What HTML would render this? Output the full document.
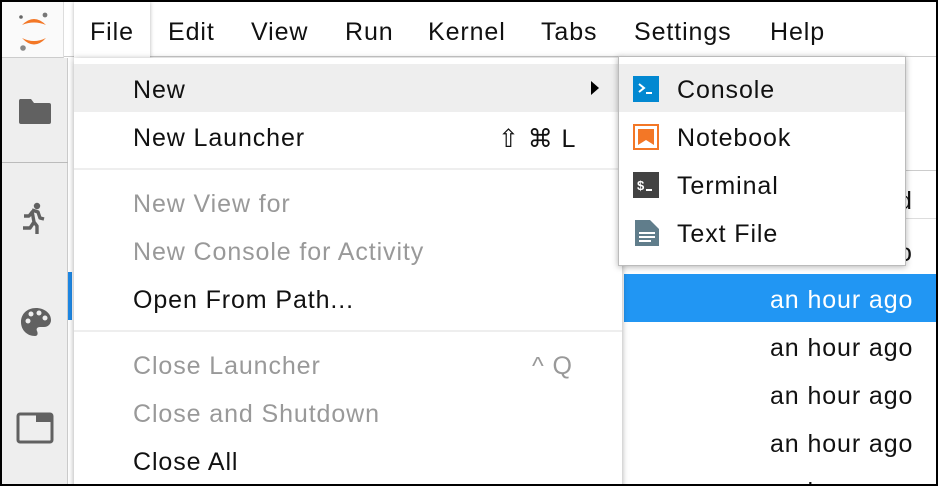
<!DOCTYPE html>
<html><head><style>
*{margin:0;padding:0;box-sizing:border-box}
body{width:938px;height:486px;overflow:hidden;background:#000;font-family:"Liberation Sans",sans-serif}
#f{position:absolute;left:2px;top:2px;width:934px;height:482px;background:#fff;overflow:hidden}
.a{position:absolute}
.t{position:absolute;font-size:25px;letter-spacing:0.9px;color:#111;white-space:nowrap}
.g{color:#999}
</style></head><body><div id="f">
<div class="a" style="left:0;top:0;width:934px;height:55px;background:#fff;border-bottom:1px solid #ccc"></div>
<div class="a" style="left:0;top:0;width:62px;height:56px;background:#fafafa;border-right:1px solid #ddd;border-bottom:1px solid #ccc"></div>
<svg class="a" style="left:14px;top:8px" width="36" height="42" viewBox="0 0 36 42">
<path d="M6 15 Q18 3 30 15 Q18 10 6 15Z" fill="#f37726"/>
<path d="M6 28 Q18 41 30 28 Q18 34 6 28Z" fill="#f37726"/>
<circle cx="5" cy="7" r="1.8" fill="#666"/><circle cx="29" cy="5" r="2.4" fill="#777"/><circle cx="7" cy="38" r="2.8" fill="#888"/>
</svg>
<div class="a" style="left:72px;top:0;width:76px;height:56px;background:#fff;box-shadow:0 0 4px rgba(0,0,0,.3)"></div>
<div class="t" style="left:88px;top:16px">File</div>
<div class="t" style="left:166px;top:16px">Edit</div>
<div class="t" style="left:249px;top:16px">View</div>
<div class="t" style="left:343px;top:16px">Run</div>
<div class="t" style="left:426px;top:16px">Kernel</div>
<div class="t" style="left:539px;top:16px">Tabs</div>
<div class="t" style="left:632px;top:16px">Settings</div>
<div class="t" style="left:768px;top:16px">Help</div>
<div class="a" style="left:0;top:56px;width:66px;height:430px;background:#eee;border-right:1px solid #ccc"></div>
<div class="a" style="left:0;top:160px;width:66px;height:1px;background:#bbb"></div>
<svg class="a" style="left:16px;top:94px" width="34" height="30" viewBox="0 0 34 30"><path d="M2 3 h11 l3 4 h15 a2 2 0 0 1 2 2 v17 a2 2 0 0 1-2 2 H3 a2 2 0 0 1-2-2 V5 a2 2 0 0 1 1-2Z" fill="#616161"/></svg>
<svg class="a" style="left:18px;top:200px" width="26" height="34" viewBox="0 0 26 34"><circle cx="17" cy="4" r="3.2" fill="#616161"/><path d="M12 8 L18 10 L20 16 L24 17 M13 9 L9 14 L4 14 M12 9 L14 20 L10 26 L3 26 M14 20 L17 24 L17 32" stroke="#616161" stroke-width="3.4" fill="none" stroke-linejoin="round"/></svg>
<svg class="a" style="left:17px;top:304px" width="34" height="32" viewBox="0 0 34 32"><path d="M17 2 C8 2 2 8 2 16 C2 24 8 30 16 30 C19 30 19 27 18 25 C17 23 18 21 21 21 H25 C29 21 32 18 32 14 C32 7 25 2 17 2Z" fill="#616161"/><circle cx="9" cy="15" r="2.5" fill="#eee"/><circle cx="12" cy="8" r="2.5" fill="#eee"/><circle cx="20" cy="7" r="2.5" fill="#eee"/><circle cx="26" cy="12" r="2.5" fill="#eee"/></svg>
<svg class="a" style="left:14px;top:410px" width="38" height="32" viewBox="0 0 38 32"><rect x="2" y="2" width="34" height="28" rx="2" fill="none" stroke="#616161" stroke-width="3"/><rect x="20" y="2" width="16" height="8" fill="#616161"/></svg>
<div class="a" style="left:66px;top:270px;width:4px;height:48px;background:#1e88e5"></div>
<div class="a" style="left:620px;top:168px;width:314px;height:1px;background:#ccc"></div>
<div class="a" style="left:620px;top:216px;width:314px;height:1px;background:#ddd"></div>
<div class="t" style="left:896px;top:185px">d</div>
<div class="t" style="left:896px;top:237px">o</div>
<div class="a" style="left:622px;top:272px;width:312px;height:48px;background:#2196f3"></div>
<div class="t" style="left:768px;top:284px;color:#fff">an hour ago</div>
<div class="t" style="left:768px;top:332px">an hour ago</div>
<div class="t" style="left:768px;top:380px">an hour ago</div>
<div class="t" style="left:768px;top:428px">an hour ago</div>
<div class="t" style="left:768px;top:476px">an hour ago</div>
<div class="a" style="left:72px;top:56px;width:548px;height:440px;background:#fff;box-shadow:0 1px 6px rgba(0,0,0,.35)"></div>
<div class="a" style="left:72px;top:62px;width:548px;height:48px;background:#eee"></div>
<div class="t" style="left:131px;top:74px">New</div>
<svg class="a" style="left:588px;top:78px" width="10" height="16"><path d="M1 1 L9 8 L1 15Z" fill="#000"/></svg>
<div class="t" style="left:131px;top:122px">New Launcher</div>
<div class="t" style="left:496px;top:122px">⇧ ⌘ L</div>
<div class="a" style="left:72px;top:166px;width:548px;height:2px;background:#eee"></div>
<div class="t g" style="left:131px;top:188px">New View for</div>
<div class="t g" style="left:131px;top:236px">New Console for Activity</div>
<div class="t" style="left:131px;top:284px">Open From Path...</div>
<div class="a" style="left:72px;top:328px;width:548px;height:2px;background:#eee"></div>
<div class="t g" style="left:131px;top:350px">Close Launcher</div>
<div class="t g" style="left:530px;top:350px">^ Q</div>
<div class="t g" style="left:131px;top:398px">Close and Shutdown</div>
<div class="t" style="left:131px;top:446px">Close All</div>
<div class="a" style="left:616px;top:54px;width:288px;height:210px;background:#fff;border:1px solid #bbb;box-shadow:0 1px 6px rgba(0,0,0,.3)"></div>
<div class="a" style="left:617px;top:62px;width:286px;height:48px;background:#eee"></div>
<svg class="a" style="left:631px;top:74px" width="26" height="26" viewBox="0 0 26 26"><rect width="26" height="26" fill="#0288d1"/><path d="M6 8 L11 12 L6 16" stroke="#fff" stroke-width="2" fill="none"/><rect x="13" y="16" width="6" height="2" fill="#fff"/></svg>
<div class="t" style="left:675px;top:74px">Console</div>
<svg class="a" style="left:631px;top:122px" width="26" height="26" viewBox="0 0 26 26"><rect x="1" y="1" width="24" height="24" fill="#fff" stroke="#f37726" stroke-width="2"/><path d="M5 5 H21 V21 L13 16 L5 21Z" fill="#f37726"/></svg>
<div class="t" style="left:675px;top:122px">Notebook</div>
<svg class="a" style="left:631px;top:170px" width="26" height="26" viewBox="0 0 26 26"><rect width="26" height="26" fill="#424242"/><text x="4" y="18" font-family="Liberation Sans" font-size="13" font-weight="bold" fill="#fff">$</text><rect x="13" y="17" width="6" height="2" fill="#fff"/></svg>
<div class="t" style="left:675px;top:170px">Terminal</div>
<svg class="a" style="left:633px;top:218px" width="24" height="26" viewBox="0 0 24 26"><path d="M0 0 H15 L24 9 V26 H0Z" fill="#607d8b"/><rect x="4" y="12" width="16" height="2" fill="#fff"/><rect x="4" y="16" width="16" height="2" fill="#fff"/><rect x="4" y="20" width="12" height="2" fill="#fff"/></svg>
<div class="t" style="left:675px;top:218px">Text File</div>
</div></body></html>
